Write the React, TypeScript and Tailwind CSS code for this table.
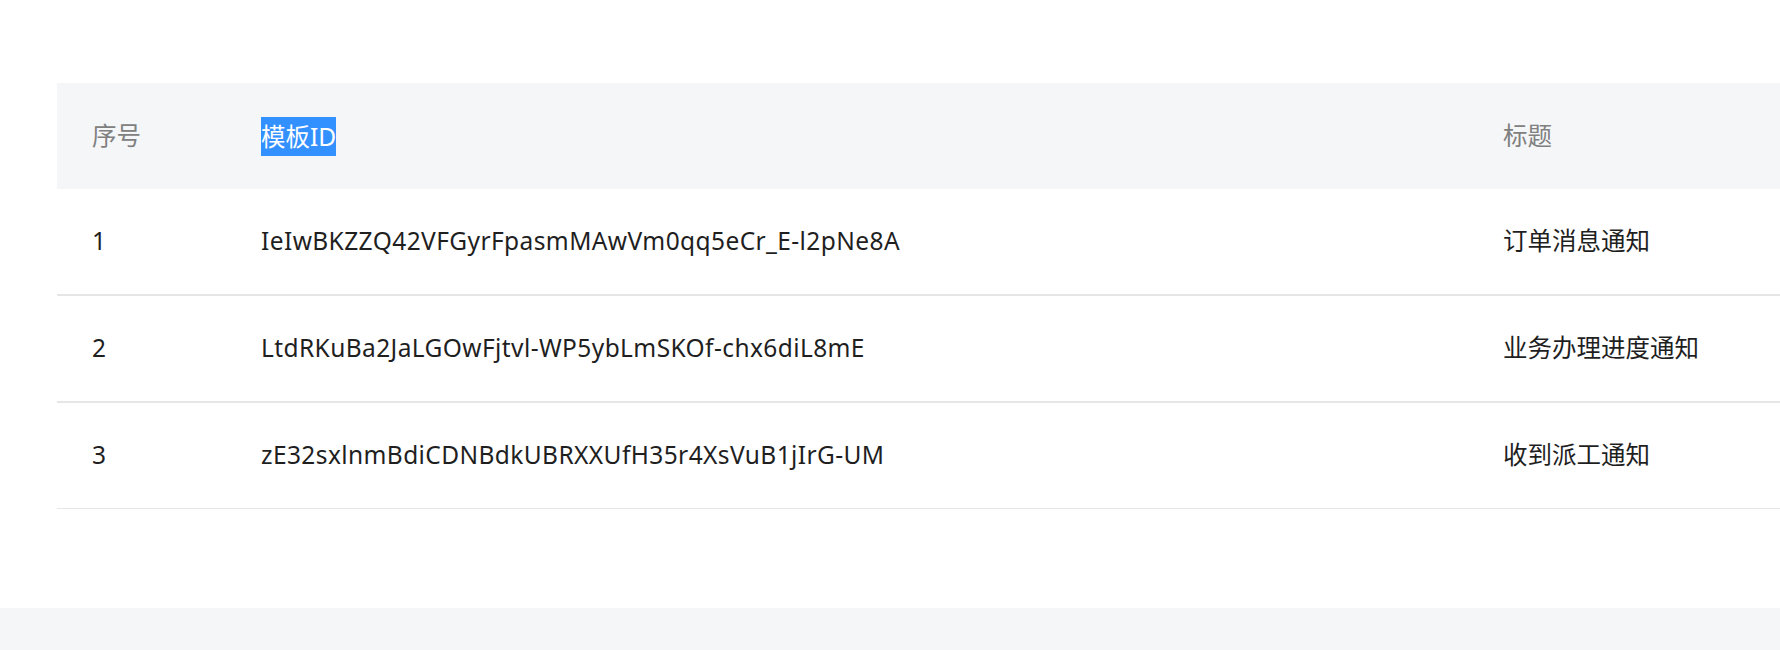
const rows = [
  { no: 1, id: "IeIwBKZZQ42VFGyrFpasmMAwVm0qq5eCr_E-l2pNe8A", title: "订单消息通知" },
  { no: 2, id: "LtdRKuBa2JaLGOwFjtvl-WP5ybLmSKOf-chx6diL8mE", title: "业务办理进度通知" },
  { no: 3, id: "zE32sxlnmBdiCDNBdkUBRXXUfH35r4XsVuB1jIrG-UM", title: "收到派工通知" },
]

export default function App() {
  return (
    <div
      className="min-h-[650px] w-[1780px] overflow-hidden bg-[#f5f6f8]"
      style={{ fontFamily: '"Noto Sans", "Noto Sans CJK SC", sans-serif' }}
    >
      <div className="bg-white pt-[83px] pb-[99px] pl-[57px]">
        <table className="w-[1800px] border-collapse text-[24.5px]">
          <thead>
            <tr className="h-[106px] bg-[#f5f6f8] text-left text-[#808080]">
              <th className="w-[204px] pl-[35px] font-normal">序号</th>
              <th className="w-[1242px] font-normal">
                <span className="inline-block bg-[#3390ff] leading-[39px] text-white">模板ID</span>
              </th>
              <th className="font-normal">标题</th>
            </tr>
          </thead>
          <tbody className="text-[#1f1f1f]">
            {rows.map((r, i) => (
              <tr
                key={r.no}
                className={
                  i === 0
                    ? "h-[106px] border-b-2 border-[#e6e6e6]"
                    : i === 1
                      ? "h-[107px] border-b-2 border-[#e6e6e6]"
                      : "h-[106px] border-b border-[#e6e6e6]"
                }
              >
                <td className="pl-[35px]">{r.no}</td>
                <td className="tracking-[0.4px]">{r.id}</td>
                <td>{r.title}</td>
              </tr>
            ))}
          </tbody>
        </table>
      </div>
    </div>
  )
}
